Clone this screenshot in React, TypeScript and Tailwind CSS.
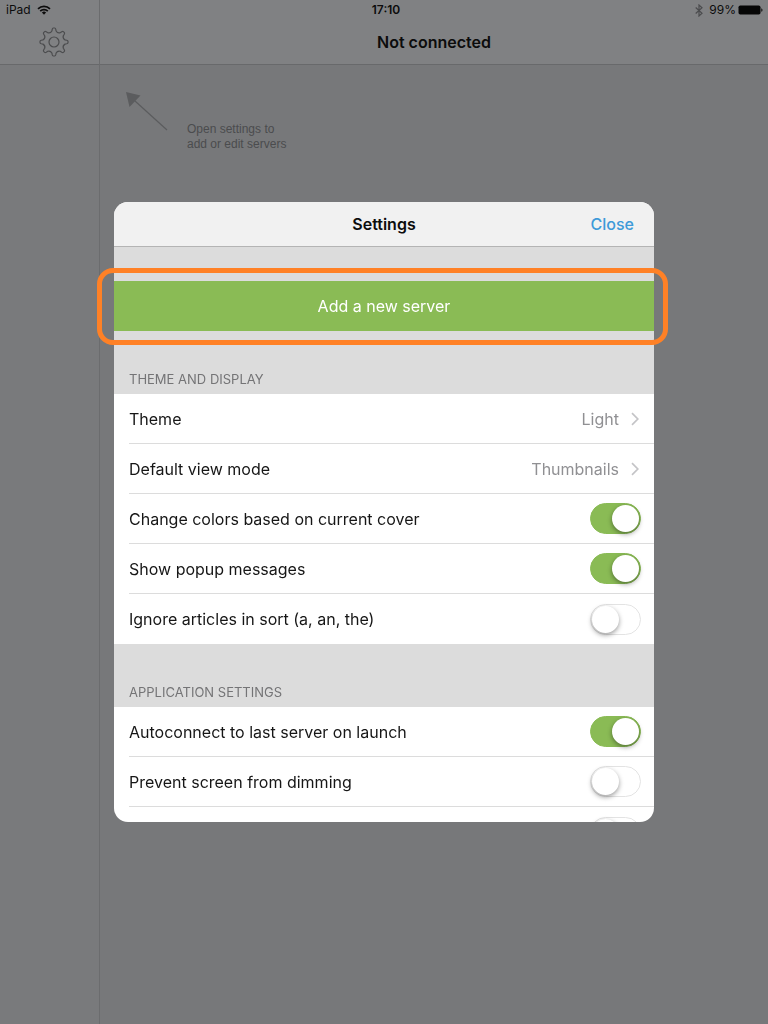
import React, { useState } from 'react';

const TOGGLE =
  'relative block h-[31px] w-[51px] shrink-0 cursor-pointer appearance-none rounded-full border border-[#e3e3e3] bg-white checked:border-[#8abb55] checked:bg-[#8abb55] before:absolute before:left-px before:top-px before:size-[27px] before:rounded-full before:bg-white before:shadow-[0_2px_5px_rgba(0,0,0,0.4)] checked:before:left-[21px]';

const point = (radius: number, degrees: number) => {
  const angle = (degrees * Math.PI) / 180;
  return `${(15 + radius * Math.sin(angle)).toFixed(2)} ${(15 - radius * Math.cos(angle)).toFixed(2)}`;
};

// eight rounded teeth joined by curved valleys
const gearPath =
  [0, 45, 90, 135, 180, 225, 270, 315]
    .map((a, i) =>
      [
        `${i === 0 ? 'M' : 'L'}${point(11.2, a - 11)}`,
        `L${point(12.8, a - 8)}`,
        `Q${point(14, a - 6)} ${point(14, a - 3)}`,
        `L${point(14, a + 3)}`,
        `Q${point(14, a + 6)} ${point(12.8, a + 8)}`,
        `L${point(11.2, a + 11)}`,
        `Q${point(9.2, a + 22.5)} ${point(11.2, a + 34)}`,
      ].join(' ')
    )
    .join(' ') + 'Z';

const GearIcon = () => (
  <svg viewBox="0 0 30 30" className="size-[30px]" fill="none" stroke="#4b4c4e" strokeWidth="1.2" strokeLinejoin="round">
    <path d={gearPath} />
    <circle cx="15" cy="15" r="5" />
  </svg>
);

const WifiIcon = () => (
  <svg viewBox="0 0 14 10" className="h-[10px] w-[14px]" fill="none" stroke="#0c0c0c" strokeWidth="1.7">
    <path d="M1 3.8a8.6 8.6 0 0 1 12 0" />
    <path d="M3.2 6.1a5.4 5.4 0 0 1 7.6 0" />
    <path d="M7 9.8 4.9 7.6a3 3 0 0 1 4.2 0Z" fill="#0c0c0c" stroke="none" />
  </svg>
);

const BluetoothIcon = () => (
  <svg viewBox="0 0 8 13" className="h-[13px] w-2" fill="none" stroke="#4b4c4e" strokeWidth="1.2">
    <path d="M0.7 3.5 7 9.3 4 12V1l3 2.7L0.7 9.5" />
  </svg>
);

const BatteryIcon = () => (
  <svg viewBox="0 0 25 10" className="h-[10px] w-[25px]" fill="#060606">
    <rect x="0.5" y="0.5" width="22" height="9" rx="1.8" />
    <path d="M23.3 3.2c1.6.5 1.6 3.1 0 3.6Z" />
  </svg>
);

const Chevron = () => (
  <svg viewBox="0 0 8 14" className="h-[14px] w-2" fill="none" stroke="#c4c4c7" strokeWidth="1.7">
    <path d="M1 1.2 6.8 7 1 12.8" />
  </svg>
);

const SectionTitle = ({ children }: { children: React.ReactNode }) => (
  <h3 className="flex h-[63px] items-end bg-[#dcdcdc] px-[15px] pb-[6px] text-[13px] leading-[18px] text-[#747476]">
    {children}
  </h3>
);

const ROW = 'ml-[15px] flex h-[50px] items-center justify-between border-b border-[#dcdcdc] pr-[13px] last:border-b-0';

const LinkRow = ({ label, value }: { label: string; value: string }) => (
  <li className={ROW}>
    <button type="button" className="flex flex-1 items-center gap-3 pr-[2px]">
      <span className="flex-1 text-left">{label}</span>
      <span className="text-[#909093]">{value}</span>
      <Chevron />
    </button>
  </li>
);

const ToggleRow = ({ label, on = false }: { label: string; on?: boolean }) => {
  const [checked, setChecked] = useState(on);

  return (
    <li className={ROW}>
      <label className="flex flex-1 items-center justify-between">
        <span>{label}</span>
        <input
          type="checkbox"
          aria-label={label || 'Option'}
          checked={checked}
          onChange={(e) => setChecked(e.target.checked)}
          className={TOGGLE}
        />
      </label>
    </li>
  );
};

const SettingsDialog = () => (
  <div role="dialog" aria-label="Settings" className="relative w-full max-w-[540px]">
    <div className="flex h-[620px] max-h-screen flex-col overflow-hidden rounded-[14px] bg-white">
      <header className="grid h-[45px] shrink-0 grid-cols-3 items-center border-b border-[#b4b4b4] bg-[#f1f1f1] px-5">
        <h2 className="col-start-2 text-center font-semibold text-[#0c0c0c]">Settings</h2>
        <button type="button" className="justify-self-end font-medium text-[#3d9ad9]">
          Close
        </button>
      </header>
      <div className="flex-1 overflow-hidden text-[#161616]">
        <div className="bg-[#dcdcdc] pt-[34px]">
          <button type="button" className="h-[50px] w-full bg-[#8abb55] text-white">
            Add a new server
          </button>
        </div>
        <SectionTitle>THEME AND DISPLAY</SectionTitle>
        <ul>
          <LinkRow label="Theme" value="Light" />
          <LinkRow label="Default view mode" value="Thumbnails" />
          <ToggleRow label="Change colors based on current cover" on />
          <ToggleRow label="Show popup messages" on />
          <ToggleRow label="Ignore articles in sort (a, an, the)" />
        </ul>
        <SectionTitle>APPLICATION SETTINGS</SectionTitle>
        <ul>
          <ToggleRow label="Autoconnect to last server on launch" on />
          <ToggleRow label="Prevent screen from dimming" />
          <ToggleRow label="" />
        </ul>
      </div>
    </div>
    <div className="pointer-events-none absolute top-[66px] -right-[14px] -left-[17px] h-[77px] rounded-2xl border-5 border-[#ff8126]" />
  </div>
);

const App = () => (
  <div className="relative flex min-h-screen flex-col bg-[#77787a] font-['Inter',sans-serif] text-[16px] leading-6">
    <div className="flex flex-1">
      <aside className="flex w-[100px] shrink-0 flex-col border-r border-[#6b6c6e] bg-[#797a7c]">
        <div className="flex h-[65px] flex-col border-b border-[#68696b] bg-[#808183]">
          <div className="flex h-5 items-center gap-[6px] pl-[6px] text-[12px] text-[#0c0c0c]">
            <span>iPad</span>
            <WifiIcon />
          </div>
          <button type="button" aria-label="Open settings" className="mt-[7px] ml-[39px] w-fit">
            <GearIcon />
          </button>
        </div>
      </aside>
      <main className="flex flex-1 flex-col">
        <header className="h-[65px] border-b border-[#68696b] bg-[#808183] text-[#0c0c0c]">
          <div className="flex h-5 items-center justify-end gap-[6px] pr-[5px] text-[12px]">
            <BluetoothIcon />
            <span className="-mr-1">99%</span>
            <BatteryIcon />
          </div>
          <h1 className="mt-[10px] text-center font-semibold">Not connected</h1>
        </header>
        <div className="flex pt-[26px] pl-[25px]">
          <svg viewBox="0 0 44 40" className="h-10 w-11" fill="#5b5c5e" stroke="#5b5c5e">
            <path d="M1 1 15.5 4.5 4.5 16Z" stroke="none" />
            <path d="m10 10 32 29" strokeWidth="1.2" />
          </svg>
          <p className="mt-[31px] ml-[18px] font-['Liberation_Sans',Arial,sans-serif] text-[12px] leading-[15px] text-[#4b4c4e]">
            Open settings to
            <br />
            add or edit servers
          </p>
        </div>
      </main>
    </div>
    <time className="absolute inset-x-0 top-0 text-center text-[12px] leading-5 font-semibold text-[#0c0c0c]">
      <span className="pl-1">17:10</span>
    </time>
    <div className="fixed inset-0 flex items-center justify-center">
      <SettingsDialog />
    </div>
  </div>
);

export default App;
